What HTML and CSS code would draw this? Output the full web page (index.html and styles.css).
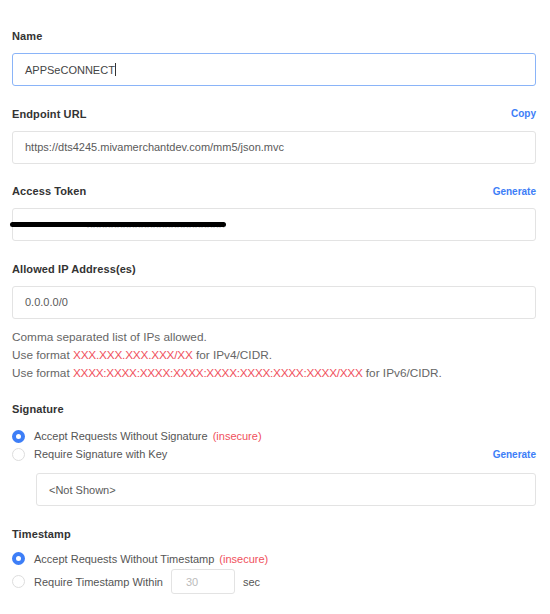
FILE: index.html
```html
<!DOCTYPE html>
<html>
<head>
<meta charset="utf-8">
<link rel="stylesheet" href="styles.css">
</head>
<body>
<form class="form">
  <div class="field">
    <div class="label-row"><label class="label">Name</label></div>
    <div class="input focused">APPSeCONNECT<span class="caret"></span></div>
  </div>
  <div class="field">
    <div class="label-row"><label class="label">Endpoint URL</label><a class="link">Copy</a></div>
    <div class="input">https://dts4245.mivamerchantdev.com/mm5/json.mvc</div>
  </div>
  <div class="field">
    <div class="label-row"><label class="label">Access Token</label><a class="link">Generate</a></div>
    <div class="input token"><span class="hidden-text">xxxxxxxxxxxxxxxxxxxxxxx</span><span class="scribble"></span></div>
  </div>
  <div class="field">
    <div class="label-row"><label class="label">Allowed IP Address(es)</label></div>
    <div class="input">0.0.0.0/0</div>
    <div class="help">
      <div>Comma separated list of IPs allowed.</div>
      <div>Use format <span class="red">XXX.XXX.XXX.XXX/XX</span> for IPv4/CIDR.</div>
      <div>Use format <span class="red v6">XXXX:XXXX:XXXX:XXXX:XXXX:XXXX:XXXX:XXXX/XXX</span> for IPv6/CIDR.</div>
    </div>
  </div>
  <div class="field">
    <div class="label-row"><label class="label">Signature</label></div>
    <div class="radios">
      <div class="radio-row"><span class="radio checked"></span><span>Accept Requests Without Signature</span><span class="red">(insecure)</span></div>
      <div class="radio-row"><span class="radio"></span><span>Require Signature with Key</span><a class="link push">Generate</a></div>
    </div>
    <div class="input indent">&lt;Not Shown&gt;</div>
  </div>
  <div class="field ts-field">
    <div class="label-row"><label class="label">Timestamp</label></div>
    <div class="radios">
      <div class="radio-row"><span class="radio checked"></span><span>Accept Requests Without Timestamp</span><span class="red">(insecure)</span></div>
      <div class="radio-row ts"><span class="radio"></span><span>Require Timestamp Within</span><span class="small-input">30</span><span>sec</span></div>
    </div>
  </div>
</form>
</body>
</html>
```
FILE: styles.css
```css
html, body {
  margin: 0;
  padding: 0;
  background: #fff;
}
body {
  font-family: "Liberation Sans", Arial, sans-serif;
  color: #333;
}
.form {
  padding: 28px 14px 0 12px;
  width: 524px;
  display: flex;
  flex-direction: column;
  gap: 19.5px;
}
.field {
  display: flex;
  flex-direction: column;
}
.label-row {
  display: flex;
  justify-content: space-between;
  align-items: center;
  height: 16px;
  margin-bottom: 9px;
}
.label {
  font-size: 11px;
  font-weight: bold;
  color: #333;
  letter-spacing: 0.1px;
}
.link {
  font-size: 10px;
  font-weight: bold;
  color: #3d7ef7;
}
.input {
  box-sizing: border-box;
  height: 33px;
  border: 1px solid #e3e3e3;
  border-radius: 3px;
  padding: 0 12px;
  display: flex;
  align-items: center;
  font-size: 11px;
  color: #5a5a5a;
}
.input.focused {
  border-color: #8ab4f8;
  color: #444;
}
.caret {
  display: inline-block;
  width: 1px;
  height: 13px;
  background: #333;
}
.token {
  position: relative;
}
.hidden-text {
  color: #c8c8c8;
  letter-spacing: 0.5px;
  padding-left: 62px;
  margin-top: -2px;
}
.scribble {
  position: absolute;
  left: -3px;
  top: 13px;
  width: 216px;
  height: 5px;
  background: #000;
  border-radius: 3px;
}
.help {
  margin-top: 9px;
  font-size: 11.8px;
  line-height: 18px;
  color: #666;
}
.red {
  color: #f0505c;
}
.help .red {
  letter-spacing: -0.2px;
}
.help .v6 {
  letter-spacing: -0.28px;
}
.radios {
  display: flex;
  flex-direction: column;
  margin-top: 1px;
}
.ts-field .radios {
  margin-top: -1px;
}
.radio-row {
  display: flex;
  align-items: center;
  gap: 6px;
  font-size: 11px;
  color: #555;
  height: 18px;
}
.radio-row .red {
  margin-left: -1px;
}
.radio {
  box-sizing: border-box;
  width: 13px;
  height: 13px;
  border-radius: 50%;
  border: 1px solid #ddd;
  margin-right: 3px;
  background: #fff;
}
.radio.checked {
  border: 4px solid #3d7ef7;
}
.push {
  margin-left: auto;
}
.indent {
  margin-left: 24px;
  margin-top: 10px;
}
.ts {
  height: 26px;
  margin-top: 1px;
}
.small-input {
  box-sizing: border-box;
  width: 64px;
  height: 25px;
  border: 1px solid #e3e3e3;
  border-radius: 3px;
  display: flex;
  align-items: center;
  padding-left: 14px;
  color: #bbb;
  margin: 0 2px 0 2px;
}
```
